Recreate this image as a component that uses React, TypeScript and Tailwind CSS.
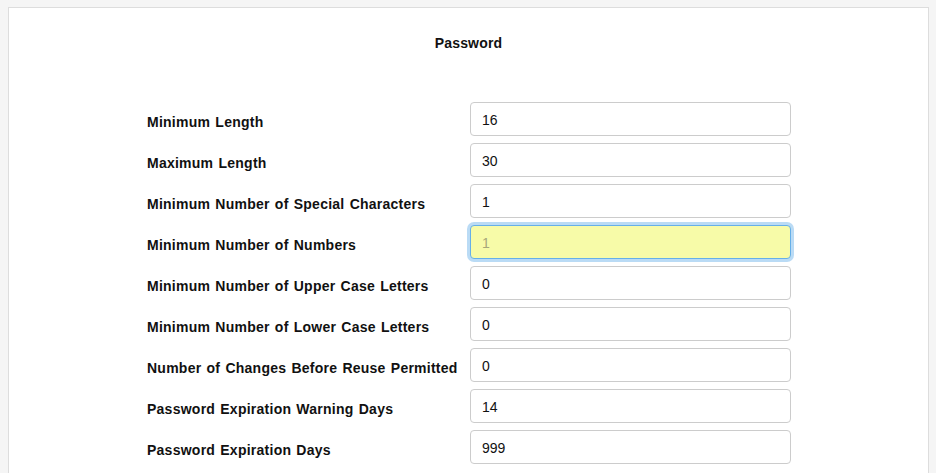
import React from "react";

const rows: { label: string; value: string; focused?: boolean }[] = [
  { label: "Minimum Length", value: "16" },
  { label: "Maximum Length", value: "30" },
  { label: "Minimum Number of Special Characters", value: "1" },
  { label: "Minimum Number of Numbers", value: "1", focused: true },
  { label: "Minimum Number of Upper Case Letters", value: "0" },
  { label: "Minimum Number of Lower Case Letters", value: "0" },
  { label: "Number of Changes Before Reuse Permitted", value: "0" },
  { label: "Password Expiration Warning Days", value: "14" },
  { label: "Password Expiration Days", value: "999" },
];

export default function App() {
  return (
    <div
      className="min-h-[473px] h-[473px] overflow-hidden bg-[#f5f5f5] pl-[8px] pr-[7px] pt-[7px] text-[#111]"
      style={{ fontFamily: '"Liberation Sans", Arial, sans-serif' }}
    >
      <div className="h-[600px] border border-[#dddddd] bg-white">
        <div className="pt-[25px] text-center text-[14px] font-bold leading-[20px] tracking-[0.2px]">Password</div>
        <div className="ml-[138px] mt-[49px] flex w-[644px] flex-col gap-[7px]">
          {rows.map((r) => (
            <div key={r.label} className="flex items-start">
              <div className="w-[323px] pt-[10px] text-[14px] font-bold leading-[20px] tracking-[0.25px] [word-spacing:1px]">{r.label}</div>
              {r.focused ? (
                <div className="flex h-[34px] w-[321px] items-center rounded-[4px] border border-[#66afe9] bg-[#f7fba8] px-[11px] pt-[2px] text-[14px] text-[#a7a77a] shadow-[0_0_0_3px_rgba(102,175,233,0.45)]">
                  {r.value}
                </div>
              ) : (
                <div className="flex h-[34px] w-[321px] items-center rounded-[4px] border border-[#cccccc] bg-white px-[11px] pt-[2px] text-[14px] text-[#111]">
                  {r.value}
                </div>
              )}
            </div>
          ))}
        </div>
      </div>
    </div>
  );
}
